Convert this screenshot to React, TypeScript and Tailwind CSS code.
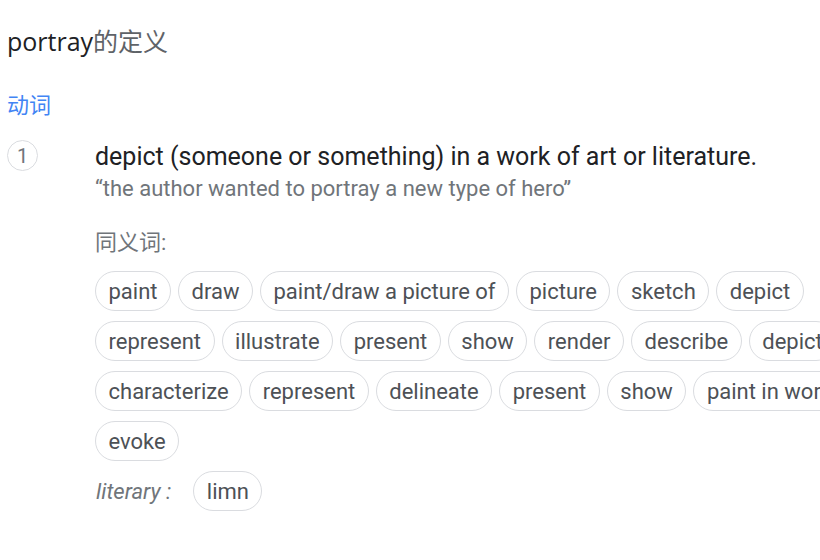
const synonyms = [
  'paint', 'draw', 'paint/draw a picture of', 'picture', 'sketch', 'depict',
  'represent', 'illustrate', 'present', 'show', 'render', 'describe', 'depict',
  'characterize', 'represent', 'delineate', 'present', 'show', 'paint in words',
  'evoke'
]

const Chip = ({ label }: { label: string }) => (
  <span className="inline-flex h-10 shrink-0 items-center whitespace-nowrap rounded-full border border-[#dadce0] px-[12.5px] text-[22px] text-[#4d5156]">
    { label }
  </span>
)

const App = () => {
  return (
    <div
      className="h-[560px] w-[820px] overflow-hidden bg-white"
      style={ { fontFamily: 'Roboto, "Noto Sans CJK SC", sans-serif' } }
    >
      <div className="w-[900px] pl-[7px] pt-[25px]">
        <h1 className="text-[25px] leading-8 text-[#202124]" style={ { fontFamily: '"Open Sans", "Noto Sans CJK SC", sans-serif' } }>
          portray<span className="text-[#5f6368]">的定义</span>
        </h1>

        <div className="mt-[35px] text-[22px] leading-7 text-[#4285f4]">动词</div>

        <div className="mt-[20px] flex">
          <div className="flex h-[31px] w-[31px] shrink-0 items-center justify-center rounded-full border border-[#dadce0] text-[20px] text-[#70757a]">
            1
          </div>

          <div className="ml-[57px] flex-1">
            <p className="text-[25px] leading-[34px] text-[#202124]">
              depict (someone or something) in a work of art or literature.
            </p>
            <p className="text-[22px] leading-[30px] text-[#70757a]">
              “the author wanted to portray a new type of hero”
            </p>

            <div className="mt-[24px] text-[22px] leading-[30px] text-[#70757a]">同义词:</div>

            <div className="mt-[13px] flex w-[780px] flex-wrap gap-x-[7px] gap-y-[10px]">
              { synonyms.map((word, i) => (
                <Chip key={ i } label={ word } />
              )) }
            </div>

            <div className="mt-[10px] flex items-center gap-[22px]">
              <span className="pl-px text-[22px] italic text-[#70757a]">literary :</span>
              <Chip label="limn" />
            </div>
          </div>
        </div>
      </div>
    </div>
  )
}

export default App
